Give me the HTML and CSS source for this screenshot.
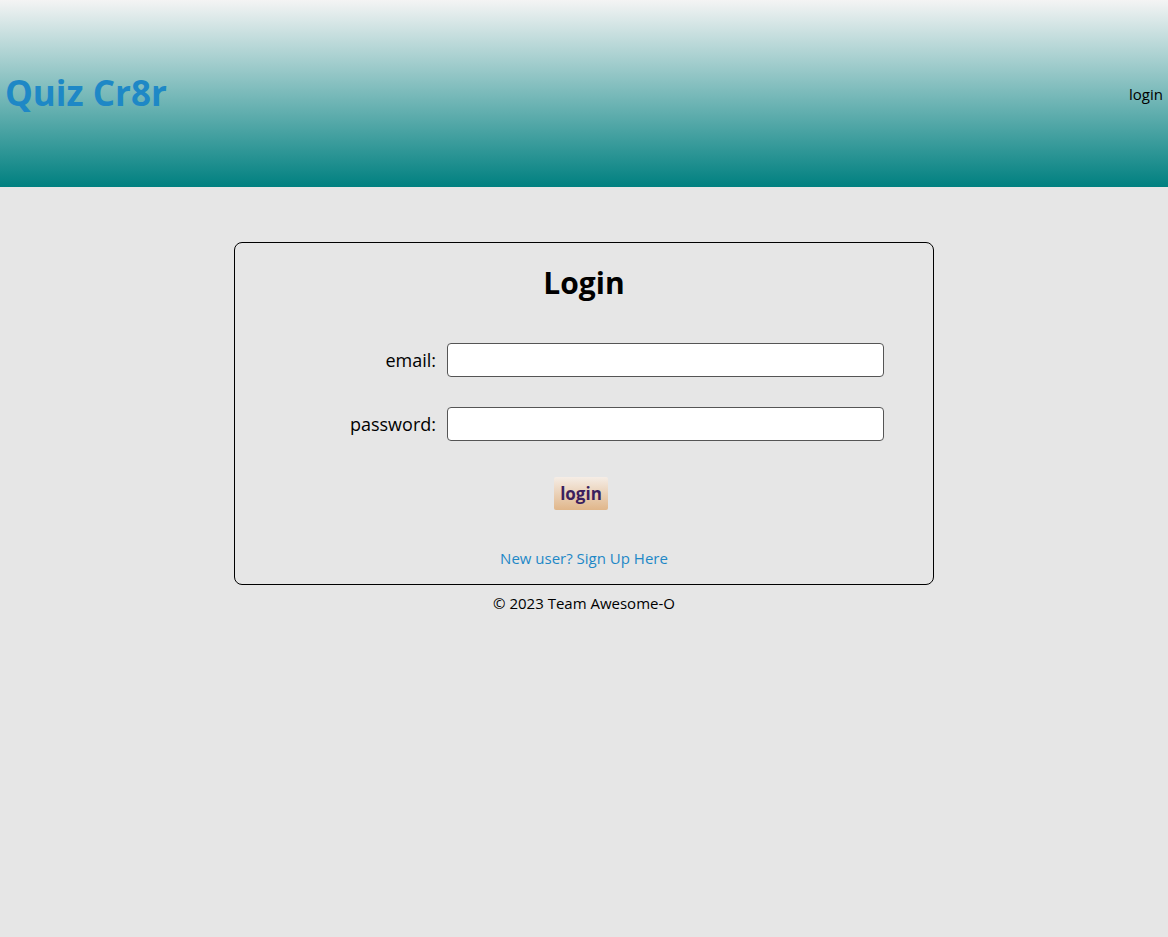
FILE: index.html
```html
<!DOCTYPE html>
<html lang="en">
<head>
<meta charset="utf-8">
<title>Quiz Cr8r</title>
<link rel="stylesheet" href="styles.css">
</head>
<body>
<header class="site-header">
  <h1 class="brand">Quiz Cr8r</h1>
  <nav class="nav"><a class="nav-link" href="#">login</a></nav>
</header>
<main class="main">
  <section class="card">
    <h2 class="card-title">Login</h2>
    <form class="login-form">
      <label class="field-label" for="email">email:</label>
      <input class="field-input" id="email" type="email">
      <label class="field-label" for="password">password:</label>
      <input class="field-input" id="password" type="password">
      <div class="actions"><button class="btn" type="button">login</button></div>
    </form>
    <p class="signup"><a class="signup-link" href="#">New user? Sign Up Here</a></p>
  </section>
  <footer class="footer">© 2023 Team Awesome-O</footer>
</main>
</body>
</html>
```
FILE: styles.css
```css
html, body {
  margin: 0;
  padding: 0;
}
body {
  background: #e6e6e6;
  font-family: "Open Sans", "DejaVu Sans", sans-serif;
  color: #000;
  min-height: 937px;
}
.site-header {
  height: 187px;
  background: linear-gradient(to bottom, #f4f4f4 0%, #008080 100%);
  display: flex;
  align-items: center;
  justify-content: space-between;
  padding: 0 5px;
}
.brand {
  margin: 0 0 2px;
  font-size: 35px;
  font-weight: bold;
  color: #1e88c6;
}
.nav-link {
  color: #000;
  text-decoration: none;
  font-size: 15px;
}
.main {
  display: flex;
  flex-direction: column;
  align-items: center;
  padding-top: 55px;
}
.card {
  width: 698px;
  border: 1px solid #000;
  border-radius: 8px;
  box-sizing: content-box;
  padding: 20px 0 16px;
  text-align: center;
}
.card-title {
  margin: 0;
  font-size: 30px;
  font-weight: bold;
  line-height: 40px;
}
.login-form {
  margin-top: 40px;
  display: grid;
  grid-template-columns: 201px 1fr;
  column-gap: 11px;
  row-gap: 30px;
  padding-right: 49px;
  align-items: center;
}
.field-label {
  text-align: right;
  font-size: 18px;
}
.field-input {
  height: 34px;
  box-sizing: border-box;
  border: 1px solid #555;
  border-radius: 4px;
  background: #fff;
  margin: 0;
}
.actions {
  grid-column: 1 / -1;
  padding-left: 43px;
  margin-top: 6px;
}
.btn {
  font-family: inherit;
  font-size: 17px;
  font-weight: bold;
  color: #3b1f5e;
  background: linear-gradient(to bottom, #f5ede6 0%, #e0b68a 100%);
  border: none;
  border-radius: 2px;
  padding: 3px 0;
  width: 54px;
  height: 33px;
}
.signup {
  margin: 38px 0 0;
  font-size: 15px;
}
.signup-link {
  color: #1e88c6;
  text-decoration: none;
}
.footer {
  margin-top: 8px;
  font-size: 15px;
}
```
